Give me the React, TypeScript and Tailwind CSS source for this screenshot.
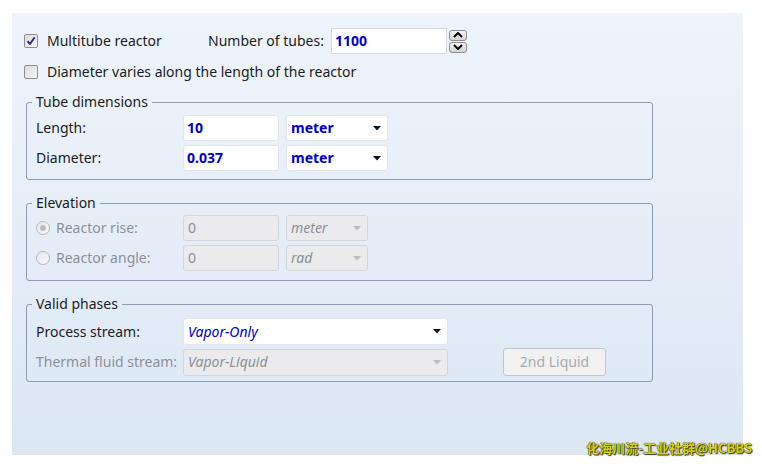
import type { JSX } from "react";

const font = "font-['Noto_Sans','Liberation_Sans',sans-serif]";

function CheckBox({ checked }: { checked: boolean }): JSX.Element {
	return (
		<span className="flex h-[14px] w-[14px] items-center justify-center rounded-[2px] border border-[#8e8f8f] bg-gradient-to-br from-[#dcdcdc] to-[#f6f6f6]">
			{checked && (
				<svg width="10" height="10" viewBox="0 0 10 10">
					<path d="M1.5 5.2 L4 8 L8.7 1.3" fill="none" stroke="#30307a" strokeWidth="2" strokeLinejoin="round" />
				</svg>
			)}
		</span>
	);
}

function Radio({ checked }: { checked: boolean }): JSX.Element {
	return (
		<span className="flex h-[14px] w-[14px] items-center justify-center rounded-full border border-[#b4b8bd] bg-gradient-to-br from-[#e4e6e8] to-[#fbfbfb]">
			{checked && <span className="h-[6px] w-[6px] rounded-full bg-[#b9bcc0]" />}
		</span>
	);
}

function Arrow({ disabled }: { disabled?: boolean }): JSX.Element {
	return (
		<svg width="8" height="5" viewBox="0 0 8 5">
			<path d="M0 0 H8 L4 4.5 Z" fill={disabled ? "#b9bcc0" : "#111"} />
		</svg>
	);
}

function Field({ value, width, disabled }: { value: string; width: string; disabled?: boolean }): JSX.Element {
	return disabled ?
			<div className={`flex h-[26px] items-center rounded-[3px] border border-[#d3d6da] bg-[#ebebee] px-[4px] text-[#8c9096] ${width}`}>{value}</div>
		:	<div className={`flex h-[26px] items-center rounded-[3px] border border-[#e2e6eb] bg-white px-[3px] font-bold text-[#0000c8] ${width}`}>{value}</div>;
}

function Select({ value, width, disabled, italic, bold }: { value: string; width: string; disabled?: boolean; italic?: boolean; bold?: boolean }): JSX.Element {
	return (
		<div
			className={`flex h-[26px] items-center justify-between rounded-[3px] border pl-[4px] pr-[6px] ${width} ${
				disabled ? "border-[#d3d6da] bg-[#ebebee] text-[#8c9096]" : "border-[#e2e6eb] bg-white text-[#0000c8]"
			} ${italic ? "italic" : ""} ${bold ? "font-bold" : ""}`}
		>
			<span>{value}</span>
			<Arrow disabled={disabled} />
		</div>
	);
}

function SpinButton({ up }: { up: boolean }): JSX.Element {
	return (
		<div className="flex h-[11px] w-[18px] items-center justify-center rounded-[3px] border border-[#8e8e8e] bg-gradient-to-b from-[#f4f4f4] to-[#d4d4d4]">
			<svg width="10" height="6" viewBox="0 0 10 6">
				<path d={up ? "M1 5 L5 1 L9 5" : "M1 1 L5 5 L9 1"} fill="none" stroke="#000" strokeWidth="2" />
			</svg>
		</div>
	);
}

function Group({ title, children, className }: { title: string; children: React.ReactNode; className: string }): JSX.Element {
	return (
		<fieldset className={`w-[627px] rounded-[3px] border border-[#8d9cae] pl-[9px] ${className}`}>
			<legend className="-ml-[4px] h-[20px] px-[4px] leading-[20px] text-[#1c1c1c]">{title}</legend>
			{children}
		</fieldset>
	);
}

export default function App(): JSX.Element {
	return (
		<div className={`h-[470px] w-[762px] bg-white pl-[12px] pt-[13px] text-[14px] leading-[20px] text-[#1c1c1c] ${font}`}>
			<div className="h-[442px] w-[731px] bg-gradient-to-b from-[#eef4fb] to-[#dce7f4] pl-[12px] pt-[15px]">
				<div className="flex h-[26px] items-center">
					<CheckBox checked />
					<span className="ml-[9px] w-[161px]">Multitube reactor</span>
					<span className="w-[123px]">Number of tubes:</span>
					<div className="flex h-[26px] w-[116px] items-center border border-[#d7dce2] bg-white px-[3px] font-bold text-[#0000c8]">1100</div>
					<div className="ml-[2px] flex flex-col gap-[1px]">
						<SpinButton up />
						<SpinButton up={false} />
					</div>
				</div>
				<div className="mt-[8px] flex h-[20px] items-center">
					<CheckBox checked={false} />
					<span className="ml-[9px]">Diameter varies along the length of the reactor</span>
				</div>

				<div className="ml-[2px]">
					<Group title="Tube dimensions" className="mt-[10px] pb-[8px] pt-[3px]">
						<div className="flex flex-col gap-[4px]">
							<div className="flex items-center">
								<span className="w-[147px]">Length:</span>
								<Field value="10" width="w-[96px]" />
								<div className="ml-[7px]">
									<Select value="meter" width="w-[102px]" bold />
								</div>
							</div>
							<div className="flex items-center">
								<span className="w-[147px]">Diameter:</span>
								<Field value="0.037" width="w-[96px]" />
								<div className="ml-[7px]">
									<Select value="meter" width="w-[102px]" bold />
								</div>
							</div>
						</div>
					</Group>

					<Group title="Elevation" className="mt-[13px] pb-[9px] pt-[2px]">
						<div className="flex flex-col gap-[4px] text-[#8c9096]">
							<div className="flex items-center">
								<div className="flex w-[147px] items-center">
									<Radio checked />
									<span className="ml-[6px]">Reactor rise:</span>
								</div>
								<Field value="0" width="w-[96px]" disabled />
								<div className="ml-[7px]">
									<Select value="meter" width="w-[82px]" disabled italic />
								</div>
							</div>
							<div className="flex items-center">
								<div className="flex w-[147px] items-center">
									<Radio checked={false} />
									<span className="ml-[6px]">Reactor angle:</span>
								</div>
								<Field value="0" width="w-[96px]" disabled />
								<div className="ml-[7px]">
									<Select value="rad" width="w-[82px]" disabled italic />
								</div>
							</div>
						</div>
					</Group>

					<Group title="Valid phases" className="mt-[13px] pb-[5px] pt-[4px]">
						<div className="flex flex-col gap-[3px]">
							<div className="flex items-center">
								<span className="w-[147px]">Process stream:</span>
								<div className="h-[27px]">
									<Select value="Vapor-Only" width="w-[265px] h-[27px]" italic />
								</div>
							</div>
							<div className="flex items-center text-[#8c9096]">
								<span className="w-[147px]">Thermal fluid stream:</span>
								<Select value="Vapor-Liquid" width="w-[265px] h-[27px]" disabled italic />
								<button className="ml-[55px] h-[28px] w-[103px] rounded-[3px] border border-[#c3c7cc] bg-[#f1f1f2] text-[#a8abaf]">2nd Liquid</button>
							</div>
						</div>
					</Group>
				</div>
			</div>
			<div className="-mt-[16px] flex justify-end pr-[10px]">
				<span className="relative font-['Noto_Sans_CJK_SC',sans-serif] text-[13px] font-bold leading-[18px] text-[#d8d800] [text-shadow:0_0_1px_#000,1px_1px_1px_#333]">化海川流-工业社群@HCBBS</span>
			</div>
		</div>
	);
}
